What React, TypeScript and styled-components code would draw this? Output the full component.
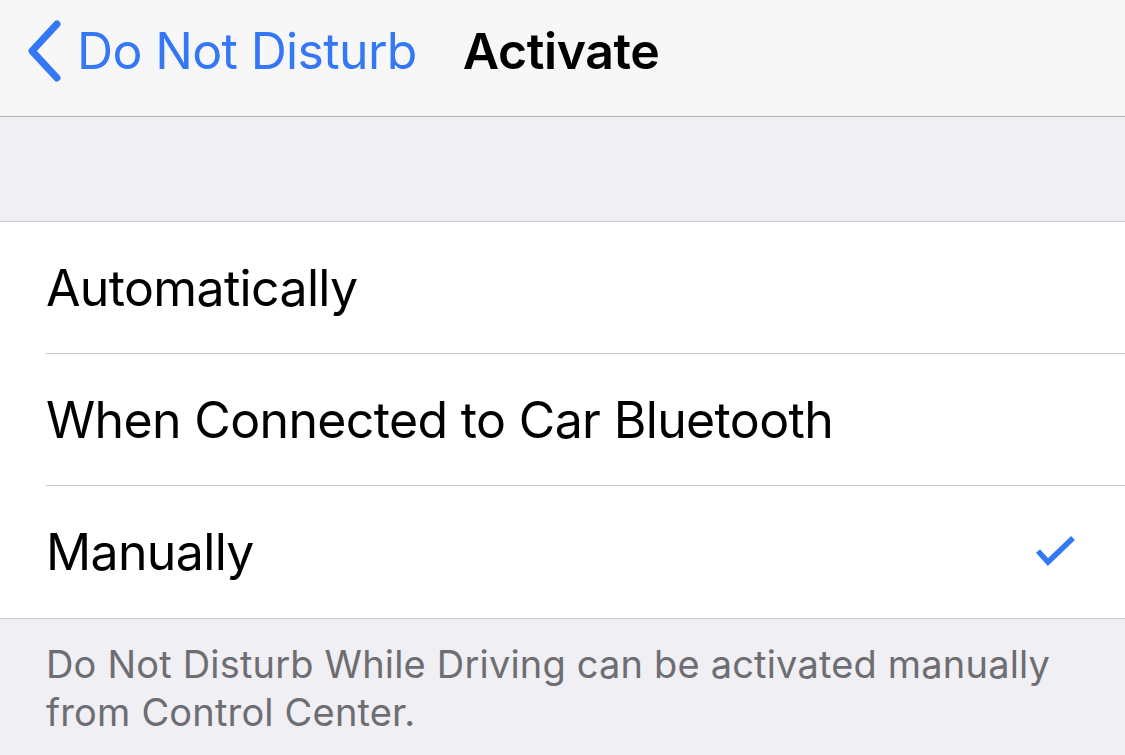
import React from "react";
import styled, { createGlobalStyle } from "styled-components";

const BLUE = "#3478f6";

const GlobalStyle = createGlobalStyle`
  html, body {
    margin: 0;
    padding: 0;
    background: #efeff4;
    font-family: Inter, "Noto Sans", "Liberation Sans", sans-serif;
    -webkit-font-smoothing: antialiased;
  }
`;

const Page = styled.div`
  width: 1125px;
  height: 755px;
  overflow: hidden;
  background: #efeff4;
`;

const NavBar = styled.div`
  height: 117px;
  box-sizing: border-box;
  background: #f7f7f8;
  border-bottom: 1px solid #b1b1b4;
  display: flex;
  align-items: center;
  padding-left: 26px;
  padding-bottom: 14px;
`;

const BackButton = styled.div`
  display: flex;
  align-items: center;
  gap: 13px;
  color: ${BLUE};
  font-size: 50px;
  letter-spacing: -0.65px;
`;

const NavTitle = styled.div`
  margin-left: 46px;
  font-size: 50px;
  font-weight: 600;
  color: #000;
  letter-spacing: -0.4px;
`;

const Spacer = styled.div`
  height: 104px;
`;

const Group = styled.div`
  background: #fff;
  border-top: 1px solid #c8c7cc;
  border-bottom: 1px solid #c8c7cc;
`;

const Row = styled.div<{ $last?: boolean }>`
  height: 132px;
  margin-left: 46px;
  padding-right: 48px;
  box-sizing: border-box;
  display: flex;
  align-items: center;
  justify-content: space-between;
  border-bottom: ${(p) => (p.$last ? "none" : "1px solid #c8c7cc")};
  font-size: 50px;
  color: #000;
  letter-spacing: -0.65px;
`;

const Footer = styled.div`
  padding: 21px 46px 0;
  font-size: 38px;
  line-height: 48px;
  color: #6d6d72;
  letter-spacing: 0.18px;
`;

const Chevron = () => (
  <svg width="38" height="64" viewBox="0 0 38 64">
    <path
      d="M31 5 L6 32 L31 59"
      fill="none"
      stroke={BLUE}
      strokeWidth="7"
      strokeLinecap="round"
      strokeLinejoin="round"
    />
  </svg>
);

const Check = () => (
  <svg width="42" height="34" viewBox="0 0 42 34">
    <path
      d="M3 16 L13 27 L38 3"
      fill="none"
      stroke={BLUE}
      strokeWidth="5.5"
    />
  </svg>
);

const options = [
  { label: "Automatically", checked: false },
  { label: "When Connected to Car Bluetooth", checked: false },
  { label: "Manually", checked: true },
];

export default function App() {
  return (
    <Page>
      <GlobalStyle />
      <NavBar>
        <BackButton>
          <Chevron />
          <span>Do Not Disturb</span>
        </BackButton>
        <NavTitle>Activate</NavTitle>
      </NavBar>
      <Spacer />
      <Group>
        {options.map((o, i) => (
          <Row key={o.label} $last={i === options.length - 1}>
            <span>{o.label}</span>
            {o.checked && <Check />}
          </Row>
        ))}
      </Group>
      <Footer>
        Do Not Disturb While Driving can be activated manually
        <br />
        from Control Center.
      </Footer>
    </Page>
  );
}
